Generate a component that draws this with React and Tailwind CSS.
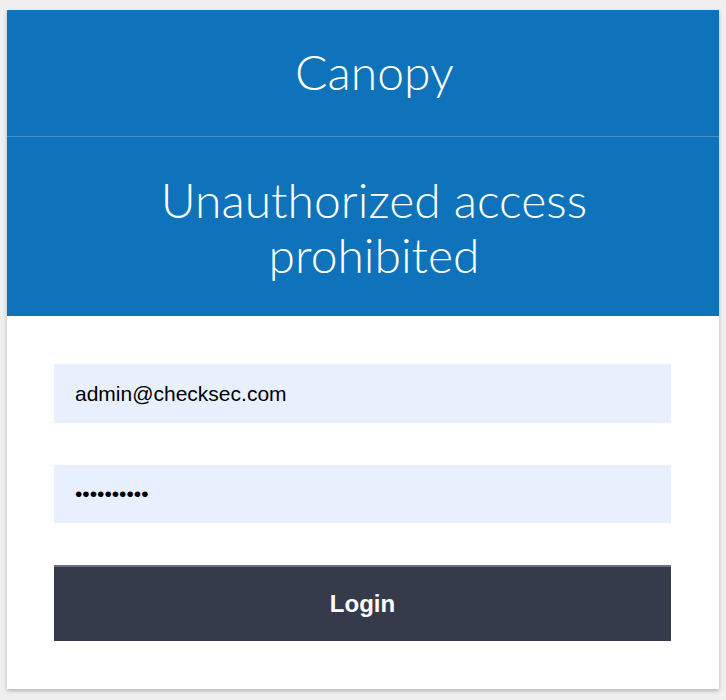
import React from 'react';

const App = () => {
    return (
        <div className="min-h-[700px] bg-[#f0f0f0] pt-[10px] pl-[7px]">
            {/* Login card */}
            <div className="w-[712px] bg-white shadow-[0_2px_4px_rgba(0,0,0,0.25)]">
                <div className="h-[126px] bg-[#0f73bc] flex items-center justify-center pl-[23px] border-b border-[#3f8fcb] box-content">
                    <h1 className="text-white text-[48px] font-light leading-none font-['Lato',sans-serif] pb-[2px]">Canopy</h1>
                </div>
                <div className="h-[179px] bg-[#0f73bc] flex items-center justify-center pl-[22px]">
                    <h2 className="text-white text-[48px] font-light leading-[55px] text-center font-['Lato',sans-serif] w-[440px]">
                        Unauthorized access prohibited
                    </h2>
                </div>

                {/* Form */}
                <form className="pl-[47px] pr-[48px] pt-[48px] pb-[48px] flex flex-col font-['Liberation_Sans',Arial,sans-serif]" onSubmit={(e) => e.preventDefault()}>
                    <input
                        type="text"
                        readOnly
                        defaultValue="admin@checksec.com"
                        className="h-[59px] bg-[#e8f0fe] px-[21px] text-[21px] text-black outline-none"
                    />
                    <input
                        type="password"
                        readOnly
                        defaultValue="checksec12"
                        className="h-[58px] mt-[42px] bg-[#e8f0fe] px-[21px] text-[21px] text-black outline-none"
                    />
                    <button
                        type="submit"
                        className="h-[76px] mt-[42px] bg-[#363b4b] border-t-2 border-[#6b7080] text-white text-[24px] font-bold"
                    >
                        Login
                    </button>
                </form>
            </div>
        </div>
    );
};

export default App;
